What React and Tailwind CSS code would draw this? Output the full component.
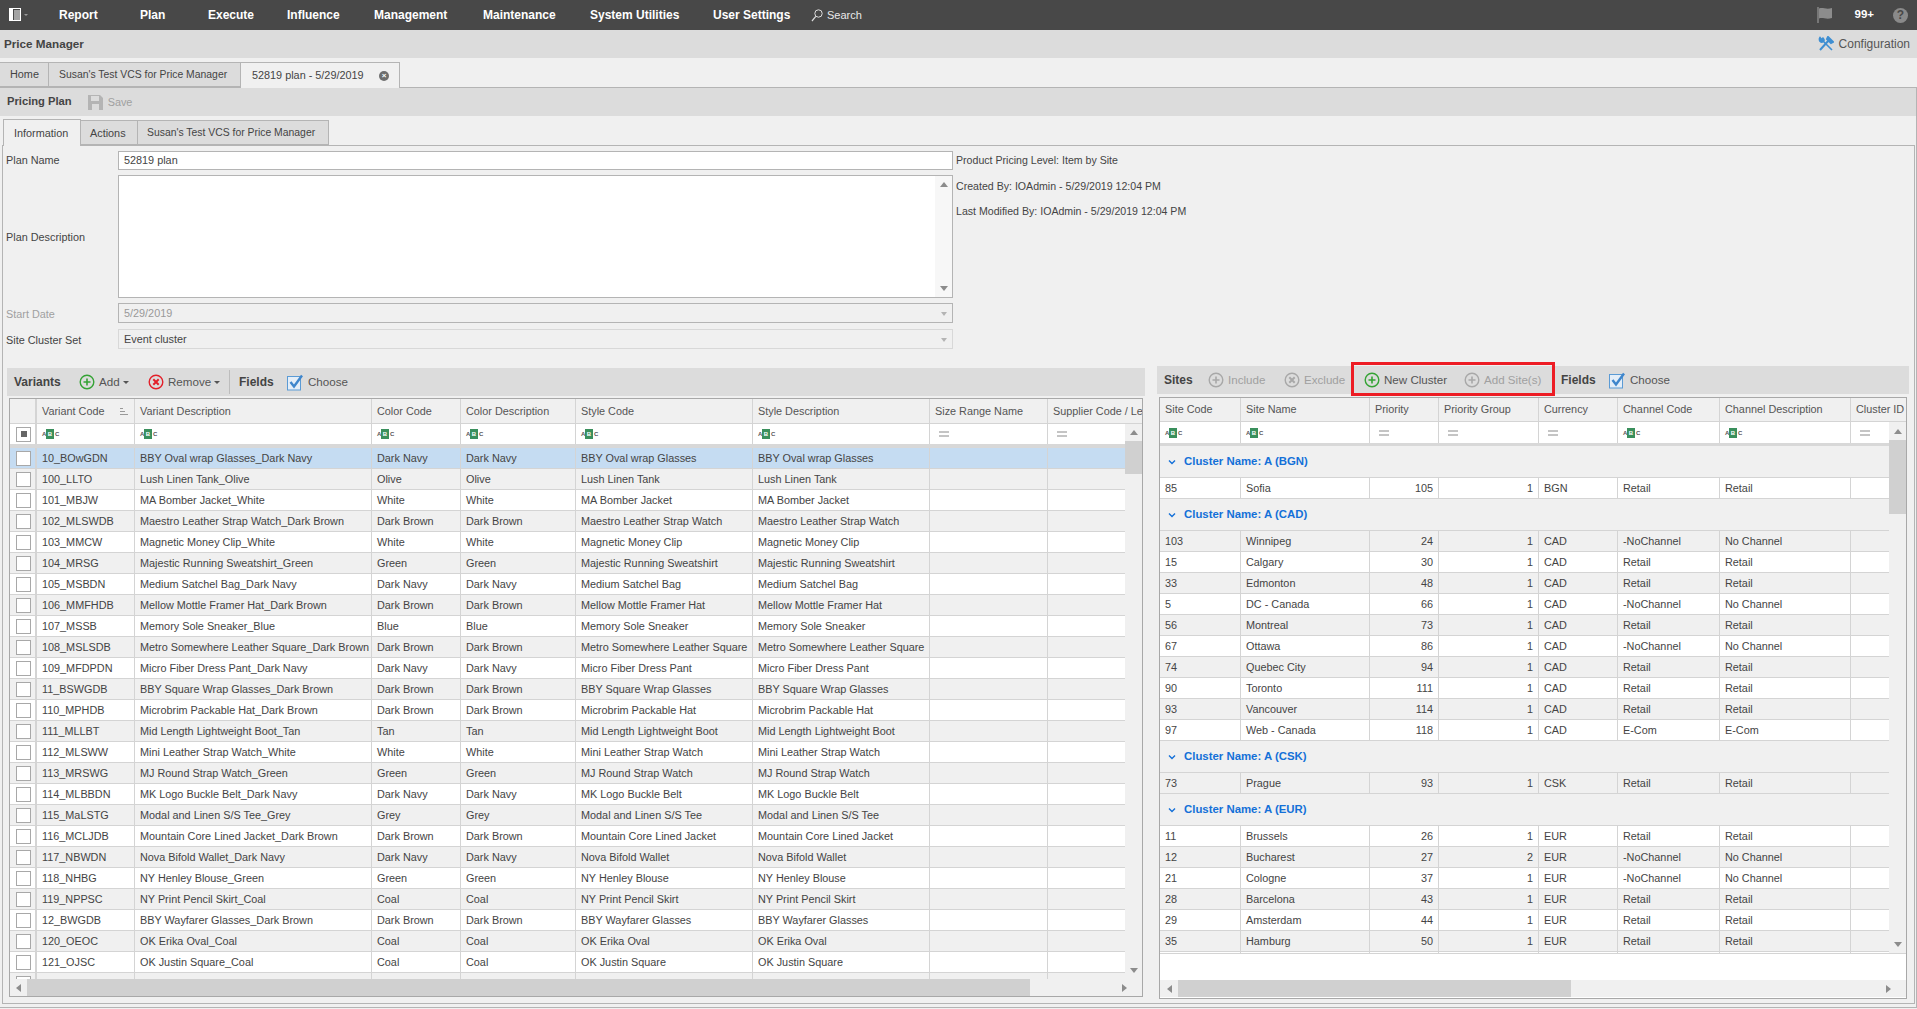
import React from "react";

const variants = [
  ["10_BOwGDN", "BBY Oval wrap Glasses_Dark Navy", "Dark Navy", "BBY Oval wrap Glasses"],
  ["100_LLTO", "Lush Linen Tank_Olive", "Olive", "Lush Linen Tank"],
  ["101_MBJW", "MA Bomber Jacket_White", "White", "MA Bomber Jacket"],
  ["102_MLSWDB", "Maestro Leather Strap Watch_Dark Brown", "Dark Brown", "Maestro Leather Strap Watch"],
  ["103_MMCW", "Magnetic Money Clip_White", "White", "Magnetic Money Clip"],
  ["104_MRSG", "Majestic Running Sweatshirt_Green", "Green", "Majestic Running Sweatshirt"],
  ["105_MSBDN", "Medium Satchel Bag_Dark Navy", "Dark Navy", "Medium Satchel Bag"],
  ["106_MMFHDB", "Mellow Mottle Framer Hat_Dark Brown", "Dark Brown", "Mellow Mottle Framer Hat"],
  ["107_MSSB", "Memory Sole Sneaker_Blue", "Blue", "Memory Sole Sneaker"],
  ["108_MSLSDB", "Metro Somewhere Leather Square_Dark Brown", "Dark Brown", "Metro Somewhere Leather Square"],
  ["109_MFDPDN", "Micro Fiber Dress Pant_Dark Navy", "Dark Navy", "Micro Fiber Dress Pant"],
  ["11_BSWGDB", "BBY Square Wrap Glasses_Dark Brown", "Dark Brown", "BBY Square Wrap Glasses"],
  ["110_MPHDB", "Microbrim Packable Hat_Dark Brown", "Dark Brown", "Microbrim Packable Hat"],
  ["111_MLLBT", "Mid Length Lightweight Boot_Tan", "Tan", "Mid Length Lightweight Boot"],
  ["112_MLSWW", "Mini Leather Strap Watch_White", "White", "Mini Leather Strap Watch"],
  ["113_MRSWG", "MJ Round Strap Watch_Green", "Green", "MJ Round Strap Watch"],
  ["114_MLBBDN", "MK Logo Buckle Belt_Dark Navy", "Dark Navy", "MK Logo Buckle Belt"],
  ["115_MaLSTG", "Modal and Linen S/S Tee_Grey", "Grey", "Modal and Linen S/S Tee"],
  ["116_MCLJDB", "Mountain Core Lined Jacket_Dark Brown", "Dark Brown", "Mountain Core Lined Jacket"],
  ["117_NBWDN", "Nova Bifold Wallet_Dark Navy", "Dark Navy", "Nova Bifold Wallet"],
  ["118_NHBG", "NY Henley Blouse_Green", "Green", "NY Henley Blouse"],
  ["119_NPPSC", "NY Print Pencil Skirt_Coal", "Coal", "NY Print Pencil Skirt"],
  ["12_BWGDB", "BBY Wayfarer Glasses_Dark Brown", "Dark Brown", "BBY Wayfarer Glasses"],
  ["120_OEOC", "OK Erika Oval_Coal", "Coal", "OK Erika Oval"],
  ["121_OJSC", "OK Justin Square_Coal", "Coal", "OK Justin Square"],
  ["122_OSSGT", "OK Shield Sol Glasses_Tan", "Tan", "OK Shield Sol Glasses"],
];

const clusters = [
  { name: "A (BGN)", rows: [["85", "Sofia", 105, 1, "BGN", "Retail", "Retail"]] },
  {
    name: "A (CAD)",
    rows: [
      ["103", "Winnipeg", 24, 1, "CAD", "-NoChannel", "No Channel"],
      ["15", "Calgary", 30, 1, "CAD", "Retail", "Retail"],
      ["33", "Edmonton", 48, 1, "CAD", "Retail", "Retail"],
      ["5", "DC - Canada", 66, 1, "CAD", "-NoChannel", "No Channel"],
      ["56", "Montreal", 73, 1, "CAD", "Retail", "Retail"],
      ["67", "Ottawa", 86, 1, "CAD", "-NoChannel", "No Channel"],
      ["74", "Quebec City", 94, 1, "CAD", "Retail", "Retail"],
      ["90", "Toronto", 111, 1, "CAD", "Retail", "Retail"],
      ["93", "Vancouver", 114, 1, "CAD", "Retail", "Retail"],
      ["97", "Web - Canada", 118, 1, "CAD", "E-Com", "E-Com"],
    ],
  },
  { name: "A (CSK)", rows: [["73", "Prague", 93, 1, "CSK", "Retail", "Retail"]] },
  {
    name: "A (EUR)",
    rows: [
      ["11", "Brussels", 26, 1, "EUR", "Retail", "Retail"],
      ["12", "Bucharest", 27, 2, "EUR", "-NoChannel", "No Channel"],
      ["21", "Cologne", 37, 1, "EUR", "-NoChannel", "No Channel"],
      ["28", "Barcelona", 43, 1, "EUR", "Retail", "Retail"],
      ["29", "Amsterdam", 44, 1, "EUR", "Retail", "Retail"],
      ["35", "Hamburg", 50, 1, "EUR", "Retail", "Retail"],
      ["38", "Munich", 52, 1, "EUR", "Retail", "Retail"],
    ],
  },
];

const td = "h-[21px] p-0 pl-[5px] border-b border-r border-[#d4d4d4] overflow-hidden whitespace-nowrap";
const th = "h-[25px] p-0 pl-[5px] border-b border-r border-[#d4d4d4] bg-[#f0f0f0] text-left font-normal text-[#555555] overflow-hidden whitespace-nowrap";
const filterTd = "h-[20px] p-0 pl-[5px] border-r border-[#d4d4d4] bg-white";

function MenuIcon() {
  return (
    <svg width="20" height="14" viewBox="0 0 20 14">
      <rect x="0.5" y="0.5" width="11" height="12" fill="none" stroke="#fff" />
      <rect x="1" y="1" width="3" height="11" fill="#fff" />
      <path d="M5 3h6M5 5h6M5 7h6M5 9h6M5 11h6" stroke="#fff" />
      <path d="M15 6h4l-2 2z" fill="#999" />
    </svg>
  );
}

function CircleIcon({ color, type }) {
  return (
    <svg width="16" height="16" viewBox="0 0 16 16" className="shrink-0">
      <circle cx="8" cy="8" r="6.8" fill="none" stroke={color} strokeWidth="1.4" />
      {type === "plus" ? (
        <path d="M8 4.5v7M4.5 8h7" stroke={color} strokeWidth="1.6" />
      ) : (
        <path d="M5.3 5.3l5.4 5.4M10.7 5.3l-5.4 5.4" stroke={color} strokeWidth="2" />
      )}
    </svg>
  );
}

function ChooseIcon() {
  return (
    <svg width="17" height="17" viewBox="0 0 17 17" className="shrink-0">
      <rect x="0.5" y="2.5" width="13" height="13.5" fill="#e4eef8" stroke="#5b9bd5" />
      <path d="M3.5 8l3.5 4.5L15 1.5" fill="none" stroke="#3f86cc" strokeWidth="2.4" />
    </svg>
  );
}

function Caret() {
  return <span className="ml-[3px] mt-[1px] w-0 h-0 border-x-[3px] border-x-transparent border-t-[3px] border-t-[#555555]" />;
}

function AbcIcon() {
  return (
    <span className="flex items-center h-[10px] text-[6px] leading-none font-bold text-[#555555]">
      <span className="w-[4px]">A</span>
      <span className="w-[8px] h-[10px] bg-[#3a8f5c] text-white flex items-center justify-center">B</span>
      <span className="w-[4px] pl-[1px]">C</span>
    </span>
  );
}

function EqIcon() {
  return (
    <svg width="10" height="6" viewBox="0 0 10 6" className="ml-[4px]">
      <path d="M0 1h10M0 5h10" stroke="#8a8a8a" />
    </svg>
  );
}

function Arrow({ dir }) {
  const shapes = {
    up: "border-x-[4px] border-x-transparent border-b-[5px] border-b-[#8c8c8c]",
    down: "border-x-[4px] border-x-transparent border-t-[5px] border-t-[#8c8c8c]",
    left: "border-y-[4px] border-y-transparent border-r-[5px] border-r-[#8c8c8c]",
    right: "border-y-[4px] border-y-transparent border-l-[5px] border-l-[#8c8c8c]",
  };
  return <span className={`w-0 h-0 ${shapes[dir]}`} />;
}

function VScroll({ thumbTop, thumbHeight }) {
  return (
    <div className="w-[17px] shrink-0 bg-[#f0f0f0] flex flex-col">
      <div className={`${thumbTop} shrink-0 flex items-center justify-center`}>
        <Arrow dir="up" />
      </div>
      <div className={`${thumbHeight} shrink-0 bg-[#d0d0d0]`} />
      <div className="flex-1 flex items-end justify-center pb-[6px]">
        <Arrow dir="down" />
      </div>
    </div>
  );
}

function HScroll({ start, thumb, tall }) {
  return (
    <div className={`${tall} shrink-0 bg-[#f0f0f0] flex items-center`}>
      <div className={`${start} h-full shrink-0 flex items-center justify-center`}>
        <Arrow dir="left" />
      </div>
      <div className={`${thumb} h-full shrink-0 bg-[#d0d0d0]`} />
      <div className="flex-1 h-full flex items-center justify-end pr-[15px]">
        <Arrow dir="right" />
      </div>
    </div>
  );
}

function ToolBtn({ icon, label, muted, className }) {
  return (
    <div className={`flex items-center ${className}`}>
      {icon}
      <span className={`ml-[4px] text-[11.6px] ${muted ? "text-[#a0a0a0]" : "text-[#555555]"}`}>{label}</span>
    </div>
  );
}

function VariantsCols({ last }) {
  return (
    <colgroup>
      <col className="w-[27px]" />
      <col className="w-[98px]" />
      <col className="w-[237px]" />
      <col className="w-[89px]" />
      <col className="w-[115px]" />
      <col className="w-[177px]" />
      <col className="w-[177px]" />
      <col className="w-[118px]" />
      <col className={last} />
    </colgroup>
  );
}

function VariantsGrid() {
  return (
    <div className="ml-[2px] h-[599px] w-[1134px] border border-[#a8a8a8] flex flex-col overflow-hidden bg-white">
      <table className="table-fixed border-separate border-spacing-0 w-[1132px] shrink-0">
        <VariantsCols last="w-[94px]" />
        <thead>
          <tr>
            <th className={`${th} border-r-2`} />
            <th className={th}>
              <span className="flex items-center justify-between pr-[6px]">
                Variant Code
                <svg width="8" height="7" viewBox="0 0 8 7">
                  <path d="M0 .5h3M0 3.5h5M0 6.5h8" stroke="#999" />
                </svg>
              </span>
            </th>
            <th className={th}>Variant Description</th>
            <th className={th}>Color Code</th>
            <th className={th}>Color Description</th>
            <th className={th}>Style Code</th>
            <th className={th}>Style Description</th>
            <th className={th}>Size Range Name</th>
            <th className={`${th} border-r-0`}>Supplier Code / Lead Time</th>
          </tr>
        </thead>
      </table>
      <div className="flex h-[556px] overflow-hidden">
        <div className="w-[1115px] shrink-0 overflow-hidden">
          <table className="table-fixed border-separate border-spacing-0 w-[1115px]">
            <VariantsCols last="w-[77px]" />
            <tbody>
              <tr>
                <td className={`${filterTd} border-r-2 !pl-[6px]`}>
                  <span className="w-[15px] h-[15px] border border-[#a8a8a8] bg-white flex items-center justify-center">
                    <span className="w-[6px] h-[6px] bg-[#666666]" />
                  </span>
                </td>
                {[0, 1, 2, 3, 4, 5].map((i) => (
                  <td key={i} className={filterTd}>
                    <AbcIcon />
                  </td>
                ))}
                <td className={filterTd}>
                  <EqIcon />
                </td>
                <td className={`${filterTd} border-r-0`}>
                  <EqIcon />
                </td>
              </tr>
              <tr>
                <td colSpan={9} className="h-[4px] p-0 bg-[#d8d8d8]" />
              </tr>
              {variants.map((v, i) => (
                <tr key={v[0]} className={i === 0 ? "bg-[#c5dcf2]" : i % 2 ? "bg-[#f0f0f0]" : "bg-white"}>
                  <td className={`${td} border-r-2 !pl-[6px]`}>
                    <span className="block w-[15px] h-[15px] border border-[#a8a8a8] bg-white" />
                  </td>
                  <td className={td}>{v[0]}</td>
                  <td className={td}>{v[1]}</td>
                  <td className={td}>{v[2]}</td>
                  <td className={td}>{v[2]}</td>
                  <td className={td}>{v[3]}</td>
                  <td className={td}>{v[3]}</td>
                  <td className={td} />
                  <td className={`${td} border-r-0`} />
                </tr>
              ))}
            </tbody>
          </table>
        </div>
        <VScroll thumbTop="h-[17px]" thumbHeight="h-[33px]" />
      </div>
      <HScroll start="w-[17px]" thumb="w-[1003px]" tall="h-[17px]" />
    </div>
  );
}

function SitesCols() {
  return (
    <colgroup>
      <col className="w-[81px]" />
      <col className="w-[129px]" />
      <col className="w-[69px]" />
      <col className="w-[100px]" />
      <col className="w-[79px]" />
      <col className="w-[102px]" />
      <col className="w-[131px]" />
      <col className="w-[55px]" />
    </colgroup>
  );
}

function SitesGrid() {
  let idx = 0;
  return (
    <div className="ml-[2px] h-[602px] w-[748px] border border-[#a8a8a8] flex flex-col overflow-hidden bg-white">
      <table className="table-fixed border-separate border-spacing-0 w-[746px] shrink-0">
        <SitesCols />
        <thead>
          <tr>
            <th className={`${th} !h-[24px]`}>Site Code</th>
            <th className={`${th} !h-[24px]`}>Site Name</th>
            <th className={`${th} !h-[24px]`}>Priority</th>
            <th className={`${th} !h-[24px]`}>Priority Group</th>
            <th className={`${th} !h-[24px]`}>Currency</th>
            <th className={`${th} !h-[24px]`}>Channel Code</th>
            <th className={`${th} !h-[24px]`}>Channel Description</th>
            <th className={`${th} !h-[24px] border-r-0`}>Cluster ID</th>
          </tr>
        </thead>
      </table>
      <div className="flex h-[532px] shrink-0 overflow-hidden border-b border-[#d4d4d4]">
        <div className="w-[729px] shrink-0 overflow-hidden">
          <table className="table-fixed border-separate border-spacing-0 w-[746px]">
            <SitesCols />
            <tbody>
              <tr>
                <td className={`${filterTd} !h-[21px]`}><AbcIcon /></td>
                <td className={`${filterTd} !h-[21px]`}><AbcIcon /></td>
                <td className={`${filterTd} !h-[21px]`}><EqIcon /></td>
                <td className={`${filterTd} !h-[21px]`}><EqIcon /></td>
                <td className={`${filterTd} !h-[21px]`}><EqIcon /></td>
                <td className={`${filterTd} !h-[21px]`}><AbcIcon /></td>
                <td className={`${filterTd} !h-[21px]`}><AbcIcon /></td>
                <td className={`${filterTd} !h-[21px] border-r-0`}><EqIcon /></td>
              </tr>
              <tr>
                <td colSpan={8} className="h-[3px] p-0 bg-[#d8d8d8]" />
              </tr>
              {clusters.map((c) => (
                <React.Fragment key={c.name}>
                  <tr className="bg-[#f0f0f0]">
                    <td colSpan={8} className="h-[32px] p-0 pl-[8px] pt-[1px] border-b border-[#d4d4d4]">
                      <span className="flex items-center text-[#1470d8] font-bold text-[11.4px]">
                        <svg width="8" height="5" viewBox="0 0 8 5" className="mr-[8px] mt-[1px]">
                          <path d="M1 .5l3 3 3-3" fill="none" stroke="#1470d8" strokeWidth="1.4" />
                        </svg>
                        Cluster Name: {c.name}
                      </span>
                    </td>
                  </tr>
                  {c.rows.map((r) => {
                    const bg = idx++ % 2 ? "bg-[#f0f0f0]" : "bg-white";
                    return (
                      <tr key={r[0]} className={bg}>
                        <td className={td}>{r[0]}</td>
                        <td className={td}>{r[1]}</td>
                        <td className={`${td} text-right !pl-0 pr-[5px]`}>{r[2]}</td>
                        <td className={`${td} text-right !pl-0 pr-[5px]`}>{r[3]}</td>
                        <td className={td}>{r[4]}</td>
                        <td className={td}>{r[5]}</td>
                        <td className={td}>{r[6]}</td>
                        <td className={`${td} border-r-0`} />
                      </tr>
                    );
                  })}
                </React.Fragment>
              ))}
            </tbody>
          </table>
        </div>
        <VScroll thumbTop="h-[18px]" thumbHeight="h-[74px]" />
      </div>
      <div className="h-[26px] shrink-0 bg-white" />
      <HScroll start="w-[18px]" thumb="w-[393px]" tall="h-[17px]" />
    </div>
  );
}

export default function App() {
  return (
    <div className="w-[1917px] h-[1009px] flex flex-col overflow-hidden bg-[#f0f0f0] text-[10.85px] leading-none text-[#444444] font-['Liberation_Sans',Arial,sans-serif]">
      {/* TOP NAV */}
      <div className="h-[30px] shrink-0 bg-[#484848] flex items-center text-white font-bold text-[12px]">
        <div className="w-[59px] pl-[9px] shrink-0">
          <MenuIcon />
        </div>
        <div className="w-[81px] shrink-0">Report</div>
        <div className="w-[68px] shrink-0">Plan</div>
        <div className="w-[79px] shrink-0">Execute</div>
        <div className="w-[87px] shrink-0">Influence</div>
        <div className="w-[109px] shrink-0">Management</div>
        <div className="w-[107px] shrink-0">Maintenance</div>
        <div className="w-[123px] shrink-0">System Utilities</div>
        <div className="w-[98px] shrink-0">User Settings</div>
        <div className="flex items-center font-normal text-[11px] text-[#e8e8e8]">
          <svg width="12" height="13" viewBox="0 0 12 13" className="mr-[4px]">
            <circle cx="7.5" cy="4.5" r="3.7" fill="none" stroke="#ddd" />
            <path d="M4.8 7.4L1 12" stroke="#ddd" strokeWidth="1.2" />
          </svg>
          Search
        </div>
        <div className="ml-auto flex items-center">
          <svg width="17" height="18" viewBox="0 0 17 18">
            <path d="M1 1v16" stroke="#8c8c8c" strokeWidth="1.4" />
            <path d="M2 2.5c4-1.5 7 1.500 13-.5v10c-6 2-9-1-13 .5z" fill="#8c8c8c" />
          </svg>
          <span className="ml-[20px] text-[11.5px]">99+</span>
          <span className="ml-[19px] mr-[9px] w-[15px] h-[15px] rounded-full bg-[#8a8a8a] text-[#484848] flex items-center justify-center text-[12px]">?</span>
        </div>
      </div>

      {/* MODULE HEADER */}
      <div className="h-[28px] shrink-0 bg-[#dcdcdc] flex items-center pl-[4px] pr-[7px]">
        <span className="font-bold text-[11.7px]">Price Manager</span>
        <div className="ml-auto flex items-center text-[12px] text-[#555555]">
          <svg width="16" height="16" viewBox="0 0 16 16" className="mr-[5px]">
            <path d="M2 14L11 4M9 2.500l4.500 4.500M10 1l5 5-2 1-4-4z" fill="none" stroke="#3f8fd2" strokeWidth="2" />
            <path d="M14 14L5 5M2 1.500a3 3 0 0 0 1 4.500 3 3 0 0 0 3-1 3 3 0 0 0-1-3L3.500 3.500z" fill="#3f8fd2" stroke="#3f8fd2" strokeWidth="1.600" />
          </svg>
          Configuration
        </div>
      </div>

      {/* DOCUMENT TABS */}
      <div className="h-[29px] shrink-0 pt-[4px] flex items-end">
        <div className="w-[49px] h-[25px] bg-[#dcdcdc] border border-[#b4b4b4] border-l-0 flex items-center pl-[10px]">Home</div>
        <div className="w-[192px] h-[25px] bg-[#dcdcdc] border border-l-0 border-[#b4b4b4] flex items-center pl-[10px] pt-[1px] text-[10.4px]">Susan's Test VCS for Price Manager</div>
        <div className="w-[159px] h-[26px] -mb-[1px] relative z-10 bg-[#f0f0f0] border border-l-0 border-b-0 border-[#b4b4b4] flex items-center pl-[11px]">
          52819 plan - 5/29/2019
          <span className="absolute left-[138px] top-[8px] w-[10px] h-[10px] rounded-full bg-[#6e6e6e] text-white text-[8px] font-bold flex items-center justify-center">×</span>
        </div>
      </div>

      {/* PLAN PANEL */}
      <div className="h-[921px] shrink-0 border-t border-r border-b border-[#b4b4b4] flex flex-col">
        <div className="h-[28px] shrink-0 bg-[#dcdcdc] flex items-center pl-[7px]">
          <span className="font-bold text-[11.2px]">Pricing Plan</span>
          <svg width="15" height="16" viewBox="0 0 15 16" className="ml-[16px]">
            <path d="M0 1h12l3 3v12H0z" fill="#b4b4b4" />
            <rect x="3" y="2" width="8" height="5" fill="#dcdcdc" />
            <rect x="4" y="10" width="7" height="6" fill="#dcdcdc" />
          </svg>
          <span className="ml-[5px] text-[#a0a0a0]">Save</span>
        </div>

        <div className="h-[29px] shrink-0 pt-[3px] pl-[3px] flex items-end">
          <div className="w-[78px] h-[27px] -mb-[1px] relative z-10 bg-[#f0f0f0] border border-b-0 border-[#b4b4b4] flex items-center pl-[10px]">Information</div>
          <div className="w-[57px] h-[25px] bg-[#dcdcdc] border border-l-0 border-[#b4b4b4] flex items-center pl-[9px] pt-[1px]">Actions</div>
          <div className="w-[191px] h-[25px] bg-[#dcdcdc] border border-l-0 border-[#b4b4b4] flex items-center pl-[9px] pt-[1px] text-[10.4px]">Susan's Test VCS for Price Manager</div>
        </div>

        <div className="ml-[2px] mr-[1px] h-[859px] border border-[#b4b4b4] flex flex-col">
          {/* FORM */}
          <div className="h-[203px] shrink-0 flex pt-[5px]">
            <div className="w-[950px] shrink-0 flex flex-col">
              <div className="flex items-center h-[19px]">
                <span className="w-[115px] pl-[3px]">Plan Name</span>
                <div className="w-[835px] h-full bg-white border border-[#b4b4b4] flex items-center pl-[5px]">52819 plan</div>
              </div>
              <div className="flex items-center h-[123px] mt-[5px]">
                <span className="w-[115px] pl-[3px] pt-[1px]">Plan Description</span>
                <div className="w-[835px] h-full bg-white border border-[#b4b4b4] flex justify-end">
                  <div className="w-[17px] bg-[#f7f7f7] flex flex-col items-center justify-between py-[6px]">
                    <Arrow dir="up" />
                    <Arrow dir="down" />
                  </div>
                </div>
              </div>
              <div className="flex items-center h-[20px] mt-[5px]">
                <span className="w-[115px] pl-[3px] pt-[2px] text-[#a0a0a0]">Start Date</span>
                <div className="w-[835px] h-full border border-[#b4b4b4] flex items-center justify-between pl-[5px] pr-[5px] pt-[1px] text-[#999999]">
                  5/29/2019
                  <span className="w-0 h-0 border-x-[3px] border-x-transparent border-t-[4px] border-t-[#b4b4b4]" />
                </div>
              </div>
              <div className="flex items-center h-[20px] mt-[6px]">
                <span className="w-[115px] pl-[3px] pt-[2px]">Site Cluster Set</span>
                <div className="w-[835px] h-full border border-[#d8d8d8] flex items-center justify-between pl-[5px] pr-[5px] pt-[1px]">
                  Event cluster
                  <span className="w-0 h-0 border-x-[3px] border-x-transparent border-t-[4px] border-t-[#b4b4b4]" />
                </div>
              </div>
            </div>
            <div className="ml-[3px] flex flex-col gap-[6.500px] text-[10.6px]">
              <div className="h-[19px] flex items-center">Product Pricing Level: Item by Site</div>
              <div className="h-[19px] flex items-center">Created By: IOAdmin - 5/29/2019 12:04 PM</div>
              <div className="h-[19px] flex items-center">Last Modified By: IOAdmin - 5/29/2019 12:04 PM</div>
            </div>
          </div>

          {/* GRIDS */}
          <div className="flex pl-[4px] pt-[17px]">
            <div className="w-[1138px] shrink-0 pt-[2px]">
              <div className="h-[28px] bg-[#dcdcdc] flex items-center pl-[7px] mb-[2px]">
                <span className="font-bold text-[12px] text-[#444444] w-[65px]">Variants</span>
                <ToolBtn className="w-[69px]" icon={<CircleIcon color="#35a335" type="plus" />} label={<span className="flex items-center">Add<Caret /></span>} />
                <ToolBtn className="w-[82px] border-r border-[#bdbdbd] h-[24px]" icon={<CircleIcon color="#e3202a" type="x" />} label={<span className="flex items-center">Remove<Caret /></span>} />
                <span className="ml-[9px] font-bold text-[12px] w-[48px]">Fields</span>
                <ToolBtn icon={<ChooseIcon />} label="Choose" />
              </div>
              <VariantsGrid />
            </div>
            <div className="w-[752px] shrink-0 ml-[12px]">
              <div className="h-[28px] bg-[#dcdcdc] flex items-center pl-[7px] mb-[3px] relative">
                <span className="font-bold text-[12px] w-[44px]">Sites</span>
                <ToolBtn muted className="w-[76px]" icon={<CircleIcon color="#a8a8a8" type="plus" />} label="Include" />
                <ToolBtn muted className="w-[80px]" icon={<CircleIcon color="#a8a8a8" type="x" />} label="Exclude" />
                <ToolBtn className="w-[100px]" icon={<CircleIcon color="#35a335" type="plus" />} label="New Cluster" />
                <ToolBtn muted className="w-[97px]" icon={<CircleIcon color="#a8a8a8" type="plus" />} label="Add Site(s)" />
                <span className="font-bold text-[12px] w-[48px]">Fields</span>
                <ToolBtn icon={<ChooseIcon />} label="Choose" />
                {/* RED HIGHLIGHT */}
                <div className="absolute left-[194px] -top-[4px] w-[204px] h-[34px] border-[3px] border-[#ed1c24]" />
              </div>
              <SitesGrid />
            </div>
          </div>
        </div>
      </div>
    </div>
  );
}
